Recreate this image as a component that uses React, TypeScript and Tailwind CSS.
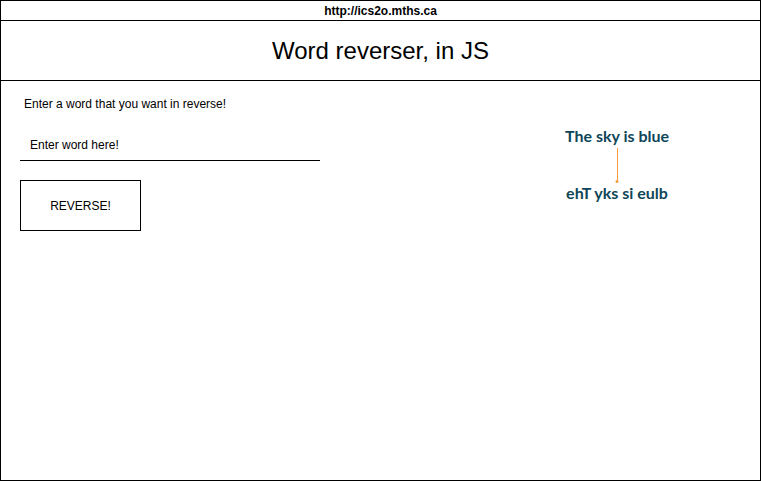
import React, { useState } from 'react';

export default function App() {
  const [word, setWord] = useState('');
  const [result, setResult] = useState('');

  const reverse = () => {
    setResult(word.split('').reverse().join(''));
  };

  return (
    <div className="w-[761px] h-[481px] border border-black bg-white flex flex-col font-['Liberation_Sans',Arial,sans-serif] text-black">
      {/* url bar */}
      <div className="h-[20px] border-b border-black flex items-center justify-center text-[12px] font-bold leading-none">
        http://ics2o.mths.ca
      </div>

      {/* header */}
      <div className="h-[60px] border-b border-black flex items-center justify-center text-[24px] leading-none">
        Word reverser, in JS
      </div>

      {/* body */}
      <div className="flex-1 flex">
        <div className="w-[556px] flex flex-col pl-[19px]">
          <p className="ml-[4px] mt-[16px] text-[12px] leading-[14px]">Enter a word that you want in reverse!</p>
          <input
            type="text"
            value={word}
            onChange={e => setWord(e.target.value)}
            placeholder="Enter word here!"
            className="mt-[18px] w-[300px] h-[32px] border-b border-black pl-[10px] pt-[1px] text-[12px] outline-none placeholder-black"
          />
          <button
            onClick={reverse}
            className="mt-[19px] w-[121px] h-[51px] border border-black text-[12px] bg-white"
          >
            REVERSE!
          </button>
          {result && <p className="mt-3 text-[12px]">{result}</p>}
        </div>

        <div className="w-[120px] flex flex-col items-center pt-[45px] font-['Lato',sans-serif] font-bold text-[16px] leading-[19px] text-[#0e4658]">
          <span>The sky is blue</span>
          <div className="relative mt-[3px] w-px h-[34px] bg-[#f39c3c]">
            <div className="absolute -bottom-[1px] left-1/2 -translate-x-1/2 w-[3px] h-[3px] rounded-full bg-[#f39c3c]" />
          </div>
          <span className="mt-[1px]">ehT yks si eulb</span>
        </div>
      </div>
    </div>
  );
}
